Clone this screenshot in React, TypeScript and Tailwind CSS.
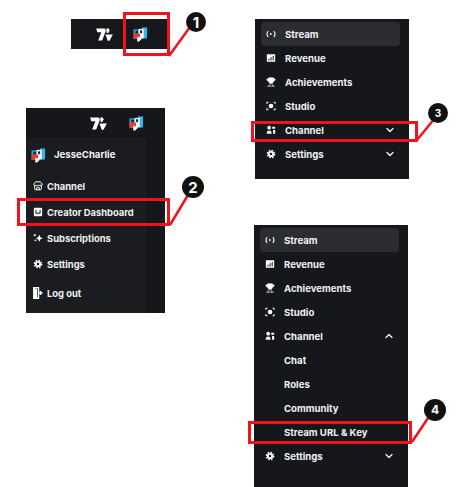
import React from "react";
import { ChevronDown, ChevronUp, Trophy, Store } from "lucide-react";

const font = "font-['Inter','Liberation_Sans',sans-serif]";

function Logo({ className }: { className: string }) {
  return (
    <svg viewBox="0 0 18 14" className={className} fill="#fff">
      <path d="M0 0.500h9.500l1 2.500-4 10.500H2.200l3.400-9H1.300z" />
      <path d="M10.800 0.500h2.700l1 2-1.300 3-1.800-.2z" />
      <path d="M10 7h8l-3.600 6.800h-1.900z" />
    </svg>
  );
}

function Avatar({ className }: { className: string }) {
  return (
    <svg viewBox="0 0 16 16" className={className}>
      <rect x="0.500" y="2.500" width="14" height="10" fill="#2aa3e0" />
      <rect x="9.500" y="0.500" width="5.500" height="11" fill="#35b5ea" />
      <rect x="6" y="2" width="5.500" height="10" fill="#f4f4f4" />
      <rect x="7.500" y="3.500" width="2.200" height="3" fill="#20242c" />
      <rect x="0.500" y="7" width="7" height="5.500" fill="#e5402f" />
      <rect x="2.500" y="4" width="2.800" height="2.800" fill="#20242c" />
      <path d="M4.500 11h4.500v2l-2.500 2.500H4.500z" fill="#fff" />
    </svg>
  );
}

function Gear({ className }: { className: string }) {
  return (
    <svg viewBox="0 0 12 12" className={className}>
      <circle cx="6" cy="6" r="3.700" fill="currentColor" />
      <circle cx="6" cy="6" r="4.400" fill="none" stroke="currentColor" strokeWidth="1.600" strokeDasharray="2 1.455" />
      <circle cx="6" cy="6" r="1.500" fill="#15171b" />
    </svg>
  );
}

function Glyph({ name }: { name: string }) {
  const cls = "w-[10px] h-[10px] shrink-0 text-white";
  if (name === "stream")
    return (
      <svg viewBox="0 0 12 12" className={cls} fill="none" stroke="currentColor" strokeWidth="1.300">
        <path d="M2.600 2.500C1 4.500 1 7.500 2.600 9.500M9.400 2.500c1.600 2 1.600 5 0 7" />
        <path d="M4.800 4.400 7.600 6 4.800 7.600z" fill="currentColor" stroke="none" />
      </svg>
    );
  if (name === "revenue")
    return (
      <svg viewBox="0 0 12 12" className={cls}>
        <rect x="1" y="1.500" width="10" height="9" fill="currentColor" />
        <path d="M3 9V7h1.200v2zM5.500 9V5h1.200v4zM8 9V3.500h1.200V9z" fill="#15171b" />
      </svg>
    );
  if (name === "trophy") return <Trophy className={cls} fill="currentColor" strokeWidth={1.500} />;
  if (name === "studio")
    return (
      <svg viewBox="0 0 12 12" className={cls} fill="none" stroke="currentColor" strokeWidth="1.200">
        <path d="M1 3.500V1.500h2M9 1.500h2v2M11 8.500v2H9M3 10.500H1v-2" />
        <circle cx="6" cy="6" r="2.800" fill="currentColor" stroke="none" />
      </svg>
    );
  if (name === "channel")
    return (
      <svg viewBox="0 0 12 12" className={cls} fill="currentColor">
        <circle cx="3.800" cy="3.200" r="2.200" />
        <path d="M.8 10.500c0-2.600 1.200-4 3-4s3 1.400 3 4z" />
        <path d="M7.500 2h3.500v2.500H7.500zM8.500 6H11v4.500H8.500z" />
      </svg>
    );
  if (name === "settings") return <Gear className={cls} />;
  if (name === "store") return <Store className={cls} strokeWidth={2.400} />;
  if (name === "dash")
    return (
      <svg viewBox="0 0 12 12" className={cls}>
        <rect x="1" y="1" width="10" height="10" rx="1.500" fill="currentColor" />
        <path d="M3.500 3.500v4h5v-4" fill="none" stroke="#15171b" strokeWidth="1.200" />
      </svg>
    );
  if (name === "subs")
    return (
      <svg viewBox="0 0 12 12" className={cls} fill="currentColor">
        <path d="M7.500 2 8.900 5l2.900 1.200L8.900 7.400 7.500 10.400 6.100 7.400 3.400 6.200 6.100 5z" />
        <rect x="1" y="1.500" width="2.200" height="2.200" />
        <rect x="2" y="8" width="1.800" height="1.800" />
      </svg>
    );
  return (
    <svg viewBox="0 0 10 12" className="w-[10px] h-[12px] shrink-0 text-white">
      <path d="M.8.800h4.700v10.400H.8z" fill="none" stroke="currentColor" strokeWidth="1.500" />
      <path d="M1 1l3 1.200v9L1 11z" fill="currentColor" />
      <path d="M5.500 6h4M7.600 4v4" fill="none" stroke="currentColor" strokeWidth="1.400" />
    </svg>
  );
}

function NavRow({ icon, label, open, active, sub }: { icon?: string; label: string; open?: boolean; active?: boolean; sub?: boolean }) {
  return (
    <div className={`h-6 flex items-center pr-[4px] rounded-sm ${sub ? "pl-6" : "pl-[5px]"} ${active ? "bg-[#2b2d31]" : ""}`}>
      {icon && (
        <span className="w-[19px] flex justify-start">
          <Glyph name={icon} />
        </span>
      )}
      <span className="flex-1 text-[9.6px] font-bold text-[#f1f2f3] leading-none pt-px">{label}</span>
      {open === false && <ChevronDown className="w-[12px] h-[12px] text-white" strokeWidth={2.400} />}
      {open === true && <ChevronUp className="w-[12px] h-[12px] text-white" strokeWidth={2.400} />}
    </div>
  );
}

function MenuRow({ icon, label, h }: { icon: string; label: string; h: string }) {
  return (
    <div className={`flex items-center gap-[4px] pl-[7px] ${h}`}>
      <Glyph name={icon} />
      <span className="text-[9.400px] font-bold text-[#f1f2f3] leading-none pt-px">{label}</span>
    </div>
  );
}

function Callout({ n, className, size }: { n: number; className: string; size: string }) {
  return (
    <div className={`absolute rounded-full bg-[#111] text-white font-bold flex items-center justify-center leading-none ${size} ${className}`}>
      {n}
    </div>
  );
}

function RedBox({ className }: { className: string }) {
  return <div className={`absolute border-[3px] border-[#f0131e] ${className}`} />;
}

export default function App() {
  return (
    <div className={`relative w-[459px] h-[487px] bg-white overflow-hidden ${font}`}>
      {/* Step 1 */}
      <div className="absolute left-[71px] top-[19px] w-[96px] h-[30px] bg-[#17181b] flex items-center pl-[25px] gap-[20px]">
        <Logo className="w-[17px] h-[13px]" />
        <Avatar className="w-[15px] h-[15px]" />
      </div>

      {/* Step 2 */}
      <div className="absolute left-[26px] top-[108px] w-[139px] h-[205px] bg-[#15171b] flex flex-col">
        <div className="h-[30px] flex items-center justify-end pr-[21px] gap-[22px]">
          <Logo className="w-[17px] h-[13px]" />
          <Avatar className="w-[15px] h-[15px]" />
        </div>
        <div className="flex-1 w-[120px] bg-[#1a1c20] flex flex-col">
          <div className="h-[35px] flex items-center gap-[8px] pl-[5px]">
            <Avatar className="w-[15px] h-[15px]" />
            <span className="text-[9.600px] font-bold text-[#f1f2f3]">JesseCharlie</span>
          </div>
          <MenuRow icon="store" label="Channel" h="h-[26px]" />
          <MenuRow icon="dash" label="Creator Dashboard" h="h-[26px]" />
          <MenuRow icon="subs" label="Subscriptions" h="h-[26px]" />
          <MenuRow icon="settings" label="Settings" h="h-[26px]" />
          <MenuRow icon="logout" label="Log out" h="h-[32px]" />
        </div>
      </div>

      {/* Step 3 */}
      <div className="absolute left-[255px] top-[19px] w-[154px] h-[160px] bg-[#15171b] pt-[3px] pl-[6px] pr-[9px]">
        <NavRow icon="stream" label="Stream" active />
        <NavRow icon="revenue" label="Revenue" />
        <NavRow icon="trophy" label="Achievements" />
        <NavRow icon="studio" label="Studio" />
        <NavRow icon="channel" label="Channel" open={false} />
        <NavRow icon="settings" label="Settings" open={false} />
      </div>

      {/* Step 4 */}
      <div className="absolute left-[254px] top-[225px] w-[154px] h-[262px] bg-[#15171b] pt-[3px] pl-[6px] pr-[9px]">
        <NavRow icon="stream" label="Stream" active />
        <NavRow icon="revenue" label="Revenue" />
        <NavRow icon="trophy" label="Achievements" />
        <NavRow icon="studio" label="Studio" />
        <NavRow icon="channel" label="Channel" open />
        <NavRow label="Chat" sub />
        <NavRow label="Roles" sub />
        <NavRow label="Community" sub />
        <NavRow label="Stream URL & Key" sub />
        <NavRow icon="settings" label="Settings" open={false} />
      </div>

      {/* Annotations */}
      <RedBox className="left-[123px] top-[12px] w-[47px] h-[44px]" />
      <RedBox className="left-[17px] top-[198px] w-[153px] h-[28px]" />
      <RedBox className="left-[251px] top-[121px] w-[167px] h-[21px]" />
      <RedBox className="left-[248px] top-[421px] w-[164px] h-[23px]" />
      <svg viewBox="0 0 459 487" className="absolute inset-0 w-[459px] h-[487px] pointer-events-none" fill="none" stroke="#f0131e" strokeWidth="2.500">
        <path d="M169 56 190 27" />
        <path d="M170 225 188 195" />
        <path d="M417 140 435 118" />
        <path d="M412 442 430 415" />
      </svg>
      <Callout n={1} size="w-[20px] h-[20px] text-[15px]" className="left-[186px] top-[12px]" />
      <Callout n={2} size="w-[22px] h-[22px] text-[15px]" className="left-[182px] top-[176px]" />
      <Callout n={3} size="w-[20px] h-[20px] text-[10px]" className="left-[428px] top-[103px]" />
      <Callout n={4} size="w-[22px] h-[22px] text-[12px]" className="left-[424px] top-[399px]" />
    </div>
  );
}
